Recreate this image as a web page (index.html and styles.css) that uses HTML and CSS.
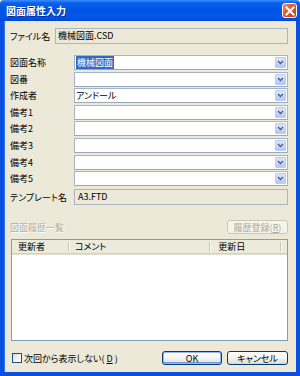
FILE: index.html
```html
<!DOCTYPE html>
<html lang="ja">
<head>
<meta charset="utf-8">
<link rel="stylesheet" href="styles.css">
</head>
<body>
<div class="window">
  <div class="titlebar">
    <span class="title">図面属性入力</span>
    <span class="close"><svg width="10" height="10" viewBox="0 0 10 10"><path d="M1.5 1.5 L8.5 8.5 M8.5 1.5 L1.5 8.5" stroke="#fff" stroke-width="2" stroke-linecap="square"/></svg></span>
  </div>
  <div class="body">
    <div class="row file-row">
      <span class="lbl lbl-file">ファイル名</span>
      <div class="ro">機械図面.CSD</div>
    </div>
    <div class="combos">
      <div class="row"><span class="lbl">図面名称</span><div class="combo"><span class="val"><span class="sel">機械図面</span></span><span class="dd"><svg width="7" height="5" viewBox="0 0 7 5"><path d="M1 1 L3.5 3.5 L6 1" fill="none" stroke="#4d6185" stroke-width="1.4"/></svg></span></div></div>
      <div class="row"><span class="lbl">図番</span><div class="combo"><span class="val"></span><span class="dd"><svg width="7" height="5" viewBox="0 0 7 5"><path d="M1 1 L3.5 3.5 L6 1" fill="none" stroke="#4d6185" stroke-width="1.4"/></svg></span></div></div>
      <div class="row"><span class="lbl">作成者</span><div class="combo"><span class="val">アンドール</span><span class="dd"><svg width="7" height="5" viewBox="0 0 7 5"><path d="M1 1 L3.5 3.5 L6 1" fill="none" stroke="#4d6185" stroke-width="1.4"/></svg></span></div></div>
      <div class="row"><span class="lbl">備考1</span><div class="combo"><span class="val"></span><span class="dd"><svg width="7" height="5" viewBox="0 0 7 5"><path d="M1 1 L3.5 3.5 L6 1" fill="none" stroke="#4d6185" stroke-width="1.4"/></svg></span></div></div>
      <div class="row"><span class="lbl">備考2</span><div class="combo"><span class="val"></span><span class="dd"><svg width="7" height="5" viewBox="0 0 7 5"><path d="M1 1 L3.5 3.5 L6 1" fill="none" stroke="#4d6185" stroke-width="1.4"/></svg></span></div></div>
      <div class="row"><span class="lbl">備考3</span><div class="combo"><span class="val"></span><span class="dd"><svg width="7" height="5" viewBox="0 0 7 5"><path d="M1 1 L3.5 3.5 L6 1" fill="none" stroke="#4d6185" stroke-width="1.4"/></svg></span></div></div>
      <div class="row"><span class="lbl">備考4</span><div class="combo"><span class="val"></span><span class="dd"><svg width="7" height="5" viewBox="0 0 7 5"><path d="M1 1 L3.5 3.5 L6 1" fill="none" stroke="#4d6185" stroke-width="1.4"/></svg></span></div></div>
      <div class="row"><span class="lbl">備考5</span><div class="combo"><span class="val"></span><span class="dd"><svg width="7" height="5" viewBox="0 0 7 5"><path d="M1 1 L3.5 3.5 L6 1" fill="none" stroke="#4d6185" stroke-width="1.4"/></svg></span></div></div>
    </div>
    <div class="row tpl-row">
      <span class="lbl">テンプレート名</span>
      <div class="ro">A3.FTD</div>
    </div>
    <div class="history-head">
      <span class="disabled-lbl">図面履歴一覧</span>
      <button class="btn disabled">履歴登録(<u>R</u>)</button>
    </div>
    <div class="listview">
      <div class="lv-head">
        <div class="col c1">更新者</div>
        <div class="col c2">コメント</div>
        <div class="col c3">更新日</div>
        <div class="col c4"></div>
      </div>
    </div>
    <div class="footer">
      <label class="chk"><span class="box"></span>次回から表示しない(<u>D</u>)</label>
      <div class="btns">
        <button class="btn default">OK</button>
        <button class="btn cancel">キャンセル</button>
      </div>
    </div>
  </div>
</div>
</body>
</html>
```
FILE: styles.css
```css
html, body {
  margin: 0;
  padding: 0;
  background: #ece9d8;
}
body {
  font-family: "Noto Sans CJK JP", "Noto Sans", sans-serif;
  font-size: 9px;
  font-feature-settings: "palt";
  color: #000;
}
.window {
  width: 300px;
  height: 376px;
  display: flex;
  flex-direction: column;
}
.titlebar {
  height: 21px;
  flex: none;
  display: flex;
  align-items: center;
  justify-content: space-between;
  padding: 0 3px 0 6px;
  background: linear-gradient(to bottom, #3d8ffb 0%, #0a5fec 14%, #0055e5 45%, #0057ea 80%, #0046d2 100%);
  border-radius: 4px 4px 0 0;
}
.title {
  color: #fff;
  font-size: 10px;
  font-weight: bold;
  line-height: 12px;
  font-feature-settings: normal;
  text-shadow: 1px 1px 0 #0a2a8c;
}
.close {
  width: 15px;
  height: 15px;
  box-sizing: border-box;
  border: 1px solid #fff;
  border-radius: 3px;
  background: linear-gradient(135deg, #ee8a6b 0%, #df5a30 45%, #c63d13 100%);
  display: flex;
  align-items: center;
  justify-content: center;
}
.body {
  flex: 1;
  border-left: 4px solid #0a4fe0;
  border-right: 4px solid #0a4fe0;
  border-bottom: 4px solid #0a4fe0;
  box-shadow: inset 1px 0 0 #2f78f0;
  padding: 7px 8px 0 6px;
  display: flex;
  flex-direction: column;
  background: #ece9d8;
}
.row {
  display: flex;
  align-items: center;
}
.lbl {
  width: 64px;
  flex: none;
  line-height: 13px;
  white-space: nowrap;
}
.lbl-file {
  width: 45px;
}
.file-row, .tpl-row {
  height: 16px;
}
.ro {
  flex: 1;
  height: 16px;
  box-sizing: border-box;
  border: 1px solid #a9b6c0;
  background: #ece9d8;
  padding-left: 2px;
  line-height: 13px;
  white-space: nowrap;
}
.combos {
  margin-top: 11px;
  display: flex;
  flex-direction: column;
  gap: 1.6px;
}
.combos .row {
  height: 15px;
}
.combo {
  flex: 1;
  height: 15px;
  box-sizing: border-box;
  border: 1px solid #a5b5c5;
  border-bottom-color: #97a9bb;
  background: #fff;
  display: flex;
  align-items: center;
  padding: 0 1px 0 1px;
}
.val {
  flex: 1;
  line-height: 11px;
  white-space: nowrap;
}
.sel {
  background: #316ac5;
  color: #fff;
  padding: 0 1px;
}
.dd {
  width: 11px;
  height: 11px;
  box-sizing: border-box;
  border: 1px solid #b9cdf4;
  border-radius: 1px;
  background: linear-gradient(to bottom, #dbe6fd 0%, #c3d4fb 60%, #b4c8f6 100%);
  display: flex;
  align-items: center;
  justify-content: center;
}
.tpl-row {
  margin-top: 3px;
}
.tpl-row .ro {
  padding-left: 3px;
}
.history-head {
  margin-top: 15px;
  height: 14px;
  display: flex;
  align-items: center;
  justify-content: space-between;
}
.disabled-lbl {
  color: #b5b1a3;
  text-shadow: 1px 1px 0 #fff;
  line-height: 13px;
}
.btn {
  font-family: inherit;
  font-size: 9px;
  font-feature-settings: "palt";
  height: 14px;
  box-sizing: border-box;
  padding: 0;
  border: 1px solid #003c74;
  border-radius: 3px;
  background: linear-gradient(to bottom, #ffffff 0%, #f4f4f0 50%, #e3e2da 90%, #d6d0c5 100%);
  color: #000;
  line-height: 11px;
  width: 61px;
}
.btn.disabled {
  border-color: #c9c7ba;
  background: #f5f4ea;
  color: #aca899;
}
.listview {
  margin-top: 5px;
  margin-left: 1px;
  height: 102px;
  box-sizing: border-box;
  border: 1px solid #7f9db9;
  background: #fff;
}
.lv-head {
  height: 13px;
  display: flex;
  background: #ebeadb;
  border-bottom: 1px solid #d6d2c2;
  box-shadow: 0 1px 0 #e2decd;
}
.col {
  box-sizing: border-box;
  padding-left: 6px;
  line-height: 13px;
  position: relative;
}
.col::after {
  content: "";
  position: absolute;
  right: 0;
  top: 2px;
  bottom: 2px;
  width: 1px;
  background: #c7c5b2;
  box-shadow: 1px 0 0 #fff;
}
.c1 { width: 58px; }
.c2 { width: 144px; }
.c3 { width: 72px; padding-left: 8px; }
.c4 { flex: 1; }
.c4::after { display: none; }
.footer {
  margin-top: 10px;
  height: 14px;
  display: flex;
  align-items: center;
  justify-content: space-between;
}
.chk {
  display: flex;
  align-items: center;
  gap: 2px;
  margin-left: 2px;
  line-height: 13px;
}
.box {
  width: 10px;
  height: 10px;
  box-sizing: border-box;
  border: 1px solid #1c5180;
  background: linear-gradient(135deg, #dcdcd7 0%, #f5f5f3 60%, #ffffff 100%);
}
.btns {
  display: flex;
  gap: 5px;
}
.btn.default {
  width: 60px;
  box-shadow: inset 0 0 0 1px #97b8f2, inset 0 -1px 0 1px #6c9ae8;
}
```
